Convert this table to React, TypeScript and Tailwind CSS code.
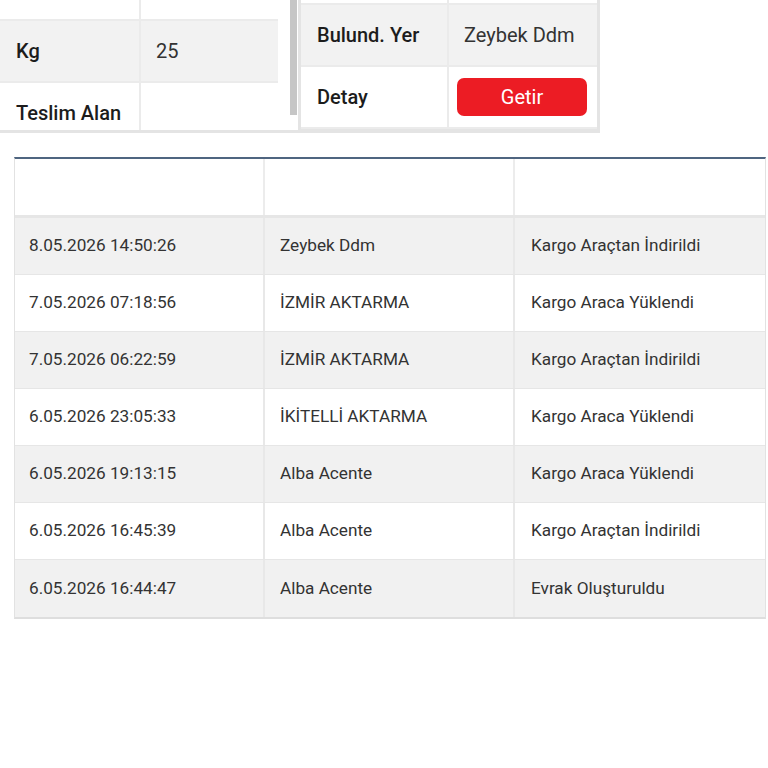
import React from 'react';

/**
 * Kargo takip ekranı: üstte gönderi bilgileri, altta hareket tablosu
 */

type InfoRow = { label: string; value?: string; shaded?: boolean; button?: boolean };

const leftRows: InfoRow[] = [
  { label: '', value: '' },
  { label: 'Kg', value: '25', shaded: true },
  { label: 'Teslim Alan', value: '' },
];

const rightRows: InfoRow[] = [
  { label: '', value: '' },
  { label: 'Bulund. Yer', value: 'Zeybek Ddm', shaded: true },
  { label: 'Detay', button: true },
];

const movements = [
  ['8.05.2026 14:50:26', 'Zeybek Ddm', 'Kargo Araçtan İndirildi'],
  ['7.05.2026 07:18:56', 'İZMİR AKTARMA', 'Kargo Araca Yüklendi'],
  ['7.05.2026 06:22:59', 'İZMİR AKTARMA', 'Kargo Araçtan İndirildi'],
  ['6.05.2026 23:05:33', 'İKİTELLİ AKTARMA', 'Kargo Araca Yüklendi'],
  ['6.05.2026 19:13:15', 'Alba Acente', 'Kargo Araca Yüklendi'],
  ['6.05.2026 16:45:39', 'Alba Acente', 'Kargo Araçtan İndirildi'],
  ['6.05.2026 16:44:47', 'Alba Acente', 'Evrak Oluşturuldu'],
];

const InfoLine: React.FC<{ row: InfoRow; labelW: string; valueW: string }> = ({ row, labelW, valueW }) => (
  <div className={`flex h-[62px] shrink-0 border-b-2 border-[#ebebeb] ${row.shaded ? 'bg-[#f2f2f2]' : 'bg-white'}`}>
    <div className={`${labelW} flex items-center border-r-2 border-[#ebebeb] pl-[16px] text-[20px] font-medium text-[#1c1c1c]`}>
      {row.label}
    </div>
    <div className={`${valueW} flex items-center text-[20px] text-[#333]`}>
      {row.button ? (
        <button
          type="button"
          className="ml-[8px] flex h-[38px] w-[130px] items-center justify-center rounded-[7px] bg-[#ec1c24] text-[20px] text-white"
        >
          Getir
        </button>
      ) : (
        <span className="pl-[15px]">{row.value}</span>
      )}
    </div>
  </div>
);

export default function App() {
  return (
    <div className="h-[768px] w-[768px] overflow-hidden bg-white font-['Roboto',sans-serif]">
      {/* Üst bilgi panelleri */}
      <div className="flex h-[133px] items-end overflow-hidden">
        <div className="flex h-[133px] w-[298px] border-b-[3px] border-[#e4e4e4]">
          <div className="h-[130px] w-[278px] overflow-hidden">
            <div className="mt-[-41px] flex flex-col">
              {leftRows.map((r, i) => (
                <InfoLine key={i} row={r} labelW="w-[141px]" valueW="w-[137px]" />
              ))}
            </div>
          </div>
          <div className="ml-[12px] h-[115px] w-[7px] bg-[#c6c6c6]" />
        </div>
        <div className="flex h-[133px] w-[302px] flex-col justify-end overflow-hidden border-x-[3px] border-b-[4px] border-[#e4e4e4]">
          {rightRows.map((r, i) => (
            <InfoLine key={i} row={r} labelW="w-[148px]" valueW="w-[148px]" />
          ))}
        </div>
      </div>

      {/* Hareket tablosu */}
      <div className="ml-[14px] mt-[24px] w-[752px] border-x border-b-2 border-t-2 border-x-[#e2e2e2] border-b-[#dedede] border-t-[#4f6580] text-[17.2px] text-[#333]">
        <div className="grid h-[59px] grid-cols-3 border-b-[3px] border-[#e6e6e6] bg-white">
          <div className="border-r-2 border-[#ececec]" />
          <div className="border-r-2 border-[#ececec]" />
          <div />
        </div>
        {movements.map((m, i) => (
          <div
            key={i}
            className={`grid h-[57px] grid-cols-3 ${i < movements.length - 1 ? 'border-b border-[#e6e6e6]' : ''} ${i % 2 === 0 ? 'bg-[#f1f1f1]' : 'bg-white'}`}
          >
            <div className="flex items-center border-r-2 border-[#e8e8e8] pl-[14px]">{m[0]}</div>
            <div className="flex items-center border-r-2 border-[#e8e8e8] pl-[15px]">{m[1]}</div>
            <div className="flex items-center pl-[16px]">{m[2]}</div>
          </div>
        ))}
      </div>
    </div>
  );
}
